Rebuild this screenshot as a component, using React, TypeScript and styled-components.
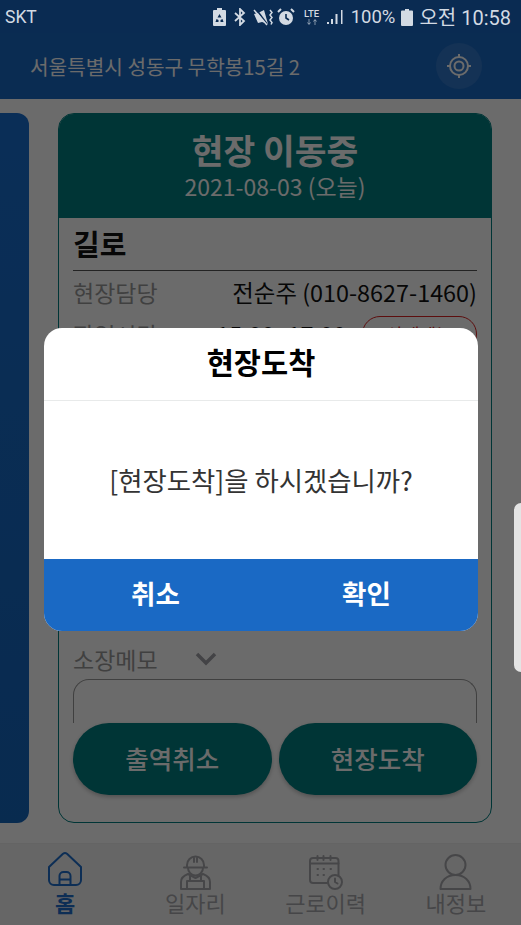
import React from "react";
import styled, { createGlobalStyle } from "styled-components";

const KR = `"Noto Sans CJK KR", "Noto Sans", sans-serif`;

const Global = createGlobalStyle`
  html, body { margin: 0; padding: 0; height: 100%; overflow: hidden; background: #fff; }
  #root { height: 100%; }
  * { box-sizing: border-box; }
`;

const Screen = styled.div`
  position: relative;
  width: 521px;
  height: 925px;
  overflow: hidden;
  display: flex;
  flex-direction: column;
  background: #fff;
  font-family: ${KR};
`;

const StatusBar = styled.div`
  position: relative;
  z-index: 3;
  height: 33px;
  flex: none;
  padding: 0 10px 0 5px;
  display: flex;
  align-items: center;
  justify-content: space-between;
  background: #0a2b52;
  color: #d3dae3;
  font-family: "Roboto", ${KR};
  font-size: 17.5px;
`;

const StatusRight = styled.div`
  display: flex;
  align-items: center;
`;

const StatusGlyph = styled.svg<{ $gap?: number }>`
  display: block;
  flex: none;
  margin-left: ${(p) => p.$gap ?? 0}px;
`;

const StatusPercent = styled.span`
  margin-left: 7px;
  font-size: 18.5px;
`;

const StatusTime = styled.span`
  margin-left: 6px;
  font-size: 20px;
`;

const LteBadge = styled.div`
  margin-left: 8px;
  width: 18px;
  flex: none;
  display: flex;
  flex-direction: column;
  align-items: center;
  color: #d3dae3;
  font-size: 9.5px;
  line-height: 10px;
  font-weight: 500;
`;

const Header = styled.header`
  height: 66px;
  flex: none;
  padding: 0 39px 0 30px;
  display: flex;
  align-items: center;
  justify-content: space-between;
  background: #1a69c4;
  color: #fff;
  font-size: 20.2px;
`;

const LocateButton = styled.div`
  width: 46px;
  height: 46px;
  border-radius: 50%;
  background: rgba(255, 255, 255, 0.1);
  display: flex;
  align-items: center;
  justify-content: center;
`;

const Content = styled.main`
  height: 744px;
  flex: none;
  padding: 14px 29px 20px 0;
  display: grid;
  grid-template-columns: 29px 1fr;
  column-gap: 29px;
`;

const SideCard = styled.div`
  border-radius: 0 12px 12px 0;
  background: linear-gradient(180deg, #1a6fd0, #1566bd);
`;

const Card = styled.section`
  border-radius: 16px;
  border: 1px solid #007e80;
  overflow: hidden;
  display: flex;
  flex-direction: column;
`;

const CardHead = styled.div`
  height: 104px;
  flex: none;
  background: #007e80;
  color: #fff;
  display: flex;
  flex-direction: column;
  align-items: center;
  padding-top: 11px;
`;

const CardTitle = styled.div`
  font-size: 34.5px;
  font-weight: 700;
  line-height: 48px;
`;

const CardDate = styled.div`
  font-size: 23px;
  line-height: 28px;
  margin-top: -1px;
`;

const CardBody = styled.div`
  flex: 1;
  padding: 0 14px;
  display: flex;
  flex-direction: column;
`;

const SiteName = styled.div`
  height: 53px;
  border-bottom: 1px solid #555;
  font-size: 29px;
  font-weight: 700;
  line-height: 51px;
  color: #111;
`;

const InfoRow = styled.div`
  height: 42px;
  display: flex;
  align-items: center;
  justify-content: space-between;
  font-size: 23px;
  color: #999;
`;

const InfoValue = styled.span`
  color: #111;
  font-size: 23.4px;
  margin-left: auto;
`;

const RedPill = styled.span`
  margin-left: 16px;
  width: 115px;
  height: 36px;
  border: 1px solid #d22;
  border-radius: 18px;
  color: #d22;
  font-size: 18px;
  display: flex;
  align-items: center;
  justify-content: center;
`;

const Spacer = styled.div`
  flex: 1;
`;

const MemoLabel = styled.div`
  height: 40px;
  display: flex;
  align-items: center;
  gap: 36px;
  font-size: 23px;
  color: #999;
`;

const MemoBox = styled.div`
  height: 44px;
  border: 1px solid #999;
  border-bottom: none;
  border-radius: 16px 16px 0 0;
`;

const Actions = styled.div`
  display: grid;
  grid-template-columns: 1fr 1fr;
  column-gap: 7px;
  margin-bottom: 27px;
`;

const ActionButton = styled.div`
  height: 72px;
  border-radius: 36px;
  padding-bottom: 3px;
  background: #007e80;
  color: #fff;
  font-size: 25.5px;
  font-weight: 500;
  display: flex;
  align-items: center;
  justify-content: center;
  box-shadow: 0 2px 4px rgba(0, 0, 0, 0.25);
`;

const BottomNav = styled.nav`
  flex: 1;
  background: #f3f3f3;
  border-top: 1px solid #eee;
  display: grid;
  grid-template-columns: repeat(4, 1fr);
`;

const NavItem = styled.div<{ $active?: boolean }>`
  display: flex;
  flex-direction: column;
  align-items: center;
  padding-top: 8px;
  color: ${(p) => (p.$active ? "#1f6ecb" : "#a8a8ac")};
  font-size: 22px;
  line-height: 24px;
  font-weight: ${(p) => (p.$active ? 700 : 400)};
`;

const NavIcon = styled.svg`
  width: 36px;
  height: 38px;
  flex: none;
  fill: none;
  stroke: currentColor;
  stroke-width: 2;
  stroke-linecap: round;
  stroke-linejoin: round;
`;

const Backdrop = styled.div`
  position: absolute;
  inset: 33px 0 0 0;
  z-index: 2;
  background: rgba(0, 0, 0, 0.58);
`;

const ScrollHandle = styled.div`
  position: absolute;
  right: 0;
  top: 503px;
  z-index: 3;
  width: 7px;
  height: 169px;
  border-radius: 7px 0 0 7px;
  background: #e4e4e4;
`;

const Dialog = styled.div`
  position: absolute;
  left: 44px;
  top: 328px;
  z-index: 3;
  width: 434px;
  height: 303px;
  border-radius: 18px;
  overflow: hidden;
  background: #fff;
  display: flex;
  flex-direction: column;
`;

const DialogTitle = styled.div`
  height: 73px;
  flex: none;
  padding-bottom: 6px;
  border-bottom: 1px solid #e8eaea;
  font-size: 29.5px;
  font-weight: 700;
  color: #000;
  display: flex;
  align-items: center;
  justify-content: center;
`;

const DialogText = styled.div`
  flex: 1;
  font-size: 26.4px;
  color: #333;
  display: flex;
  align-items: center;
  justify-content: center;
  padding-bottom: 2px;
`;

const DialogActions = styled.div`
  height: 72px;
  flex: none;
  padding: 0 6px;
  background: #1a69c4;
  display: grid;
  grid-template-columns: 1fr 1fr;
`;

const DialogButton = styled.div`
  color: #fff;
  font-size: 26.5px;
  font-weight: 700;
  padding-bottom: 6px;
  display: flex;
  align-items: center;
  justify-content: center;
`;

const Glyph = styled.svg`
  display: block;
  flex: none;
`;

const App = () => (
  <>
    <Global />
    <Screen>
      <StatusBar>
        <span>SKT</span>
        <StatusRight>
          <StatusGlyph width="13" height="18" viewBox="0 0 13 18">
            <path d="M4 0h5v2h3a1 1 0 0 1 1 1v14a1 1 0 0 1-1 1H1a1 1 0 0 1-1-1V3a1 1 0 0 1 1-1h3z" fill="#d3dae3" />
            <path d="M6.500 6 4.500 9.500h4zM3.500 11l-1 3h3v-2zM9.500 11l1 3h-3v-2z" fill="#0a2b52" />
          </StatusGlyph>
          <StatusGlyph $gap={8} width="12" height="18" viewBox="0 0 12 18" fill="none" stroke="#d3dae3" strokeWidth="1.8">
            <path d="M1 5l9 8-4 4V1l4 4-9 8" />
          </StatusGlyph>
          <StatusGlyph $gap={7} width="21" height="18" viewBox="0 0 21 18" fill="none">
            <path d="M1 6l4-1 6-3 4 14-6-2-4 1z" fill="#d3dae3" />
            <path d="M3 1l11 15" stroke="#0a2b52" strokeWidth="1.6" />
            <path d="M1 2l13 15" stroke="#d3dae3" strokeWidth="1.5" />
            <path d="M17 2l2 2.500-2 2.500 2 2.500-2 2.500 2 2.500-1 2" stroke="#d3dae3" strokeWidth="1.5" />
          </StatusGlyph>
          <StatusGlyph $gap={3} width="18" height="18" viewBox="0 0 18 18" fill="none">
            <circle cx="9" cy="10" r="7" fill="#d3dae3" />
            <path d="M9 6v4l3 2" stroke="#0a2b52" strokeWidth="1.6" />
            <path d="M1 4l3-3M17 4l-3-3" stroke="#d3dae3" strokeWidth="2" />
          </StatusGlyph>
          <LteBadge>
            LTE
            <Glyph width="14" height="6" viewBox="0 0 14 6" fill="none" stroke="#d3dae3" strokeOpacity="0.6" strokeWidth="1">
              <path d="M4 0v5M2.500 3.500 4 5.500l1.500-2M10 6V1M8.500 2.500 10 .5l1.500 2" />
            </Glyph>
          </LteBadge>
          <StatusGlyph $gap={6} width="17" height="18" viewBox="0 0 17 18" fill="#d3dae3">
            <rect x="0" y="14" width="2" height="2" />
            <rect x="4" y="11" width="2" height="5" />
            <rect x="8.500" y="6" width="2" height="10" />
            <rect x="14" y="2" width="1.500" height="14" />
          </StatusGlyph>
          <StatusPercent>100%</StatusPercent>
          <StatusGlyph $gap={6} width="12" height="18" viewBox="0 0 12 18">
            <path d="M4 1h4v1.500h3a1 1 0 0 1 1 1V17a1 1 0 0 1-1 1H1a1 1 0 0 1-1-1V3.500a1 1 0 0 1 1-1h3z" fill="#d3dae3" />
          </StatusGlyph>
          <StatusTime>오전 10:58</StatusTime>
        </StatusRight>
      </StatusBar>
      <Header>
        <span>서울특별시 성동구 무학봉15길 2</span>
        <LocateButton>
          <Glyph width="26" height="26" viewBox="0 0 26 26" fill="none" stroke="#fff" strokeWidth="2">
            <circle cx="13" cy="13" r="9" />
            <circle cx="13" cy="13" r="4.500" />
            <path d="M13 1v3M13 22v3M1 13h3M22 13h3" />
          </Glyph>
        </LocateButton>
      </Header>
      <Content>
        <SideCard />
        <Card>
          <CardHead>
            <CardTitle>현장 이동중</CardTitle>
            <CardDate>2021-08-03 (오늘)</CardDate>
          </CardHead>
          <CardBody>
            <SiteName>길로</SiteName>
            <InfoRow>
              <span>현장담당</span>
              <InfoValue>전순주 (010-8627-1460)</InfoValue>
            </InfoRow>
            <InfoRow>
              <span>작업시간</span>
              <InfoValue>15:00~17:00</InfoValue>
              <RedPill>상세메뉴</RedPill>
            </InfoRow>
            <Spacer />
            <MemoLabel>
              <span>소장메모</span>
              <Glyph width="24" height="14" viewBox="0 0 24 14" fill="none" stroke="#a0a0a6" strokeWidth="3.500">
                <path d="M3 2l9 9 9-9" />
              </Glyph>
            </MemoLabel>
            <MemoBox />
            <Actions>
              <ActionButton>출역취소</ActionButton>
              <ActionButton>현장도착</ActionButton>
            </Actions>
          </CardBody>
        </Card>
      </Content>
      <BottomNav>
        <NavItem $active>
          <NavIcon viewBox="0 0 36 38">
            <path d="M2 15 16 1.800q2-1.500 4 0L34 15v13a5 5 0 0 1-5 5H7a5 5 0 0 1-5-5z" />
            <path d="M12.500 33v-9a4 4 0 0 1 4-4h3a4 4 0 0 1 4 4v9M12.500 27.500h11" />
          </NavIcon>
          <span>홈</span>
        </NavItem>
        <NavItem>
          <NavIcon viewBox="0 0 36 38">
            <path d="M10 15V13a8.500 8.500 0 0 1 17 0v2M7 15.500h23M11 16a7.500 7.500 0 0 0 15 0M17 5v5M20 5v5" />
            <path d="M4 37v-7c0-4 3-6.500 7-8l7.500 4 7.500-4c4 1.500 7 4 7 8v7zM10 37v-8h17v8M13 29v-5M24 29v-5" />
          </NavIcon>
          <span>일자리</span>
        </NavItem>
        <NavItem>
          <NavIcon viewBox="0 0 36 38">
            <path d="M19 31H5a3 3 0 0 1-3-3V9a3 3 0 0 1 3-3h22.500a3 3 0 0 1 3 3v15" />
            <path d="M2 11.500h28.500M9.500 4v4M15.500 4v4M22.500 4v4M9.500 17h.5M15.500 17h.5M22.500 17h.5M9.500 23h.5M15.500 23h.5" />
            <circle cx="27" cy="30" r="7" />
            <path d="M27 26.500V30l2.500 1.500" />
          </NavIcon>
          <span>근로이력</span>
        </NavItem>
        <NavItem>
          <NavIcon viewBox="0 0 36 38">
            <circle cx="17.500" cy="13" r="10" />
            <path d="M2.500 37c0-8 6-14 15-14s15 6 15 14z" />
          </NavIcon>
          <span>내정보</span>
        </NavItem>
      </BottomNav>
      <Backdrop />
      <ScrollHandle />
      <Dialog>
        <DialogTitle>현장도착</DialogTitle>
        <DialogText>[현장도착]을 하시겠습니까?</DialogText>
        <DialogActions>
          <DialogButton>취소</DialogButton>
          <DialogButton>확인</DialogButton>
        </DialogActions>
      </Dialog>
    </Screen>
  </>
);

export default App;
